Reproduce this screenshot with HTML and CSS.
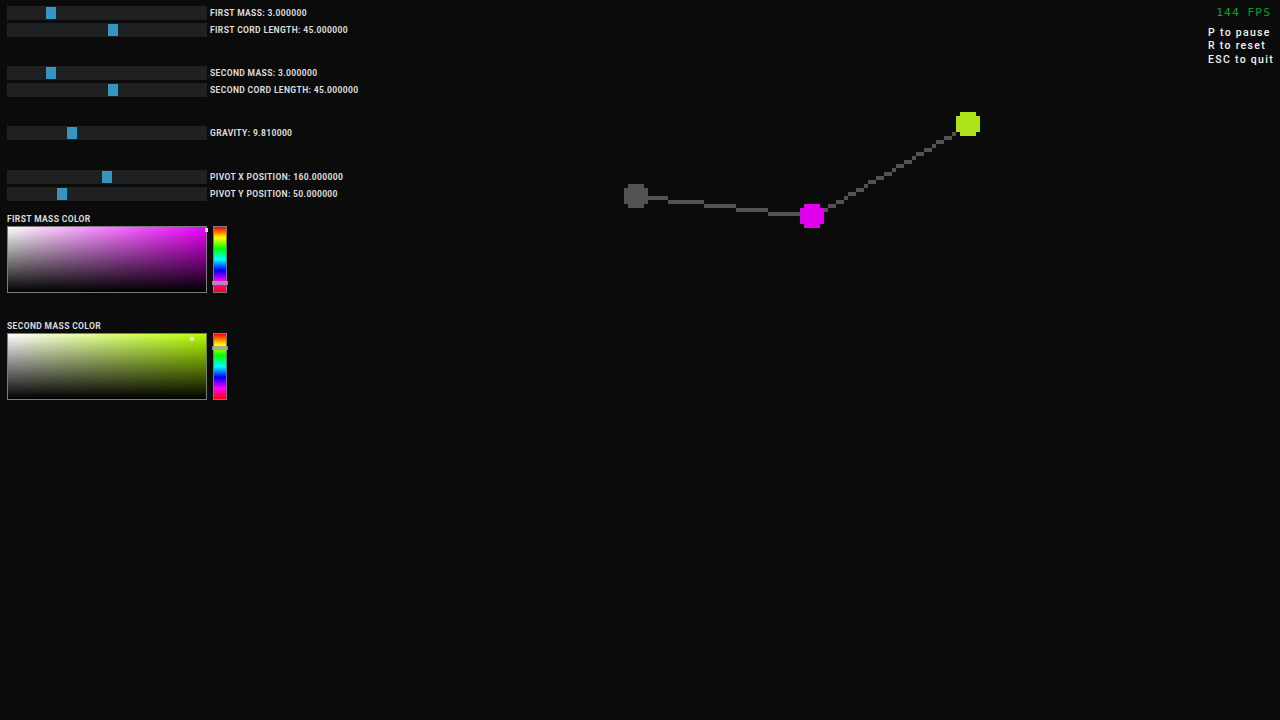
FILE: index.html
```html
<!DOCTYPE html>
<html lang="en">
<head>
<meta charset="utf-8">
<title>Double Pendulum</title>
<link rel="stylesheet" href="styles.css">
</head>
<body>
<svg class="sim" viewBox="0 0 320 180" width="1280" height="720" aria-hidden="true">
  <g class="rope">
    <rect x="157" y="46" width="4" height="1"/>
    <rect x="156" y="47" width="6" height="4"/>
    <rect x="157" y="51" width="4" height="1"/>
    <rect x="162" y="49" width="5" height="1"/>
    <rect x="167" y="50" width="9" height="1"/>
    <rect x="176" y="51" width="8" height="1"/>
    <rect x="184" y="52" width="8" height="1"/>
    <rect x="192" y="53" width="8" height="1"/>
    <rect x="206" y="52" width="1" height="1"/>
    <rect x="207" y="51" width="2" height="1"/>
    <rect x="209" y="50" width="2" height="1"/>
    <rect x="211" y="49" width="1" height="1"/>
    <rect x="212" y="48" width="2" height="1"/>
    <rect x="214" y="47" width="2" height="1"/>
    <rect x="216" y="46" width="1" height="1"/>
    <rect x="217" y="45" width="2" height="1"/>
    <rect x="219" y="44" width="2" height="1"/>
    <rect x="221" y="43" width="2" height="1"/>
    <rect x="223" y="42" width="1" height="1"/>
    <rect x="224" y="41" width="2" height="1"/>
    <rect x="226" y="40" width="2" height="1"/>
    <rect x="228" y="39" width="1" height="1"/>
    <rect x="229" y="38" width="2" height="1"/>
    <rect x="231" y="37" width="2" height="1"/>
    <rect x="233" y="36" width="1" height="1"/>
    <rect x="234" y="35" width="2" height="1"/>
    <rect x="236" y="34" width="2" height="1"/>
    <rect x="238" y="33" width="1" height="1"/>
  </g>
  <g class="mass-one">
    <rect x="201" y="51" width="4" height="1"/>
    <rect x="200" y="52" width="6" height="4"/>
    <rect x="201" y="56" width="4" height="1"/>
  </g>
  <g class="mass-two">
    <rect x="240" y="28" width="4" height="1"/>
    <rect x="239" y="29" width="6" height="4"/>
    <rect x="240" y="33" width="4" height="1"/>
  </g>
</svg>

<div class="screen">
  <div class="panel">
    <div class="group">
      <div class="row"><div class="track"><div class="thumb" style="margin-left:39px"></div></div><span class="label">FIRST MASS: 3.000000</span></div>
      <div class="row"><div class="track"><div class="thumb" style="margin-left:101px"></div></div><span class="label">FIRST CORD LENGTH: 45.000000</span></div>
    </div>
    <div class="group">
      <div class="row"><div class="track"><div class="thumb" style="margin-left:39px"></div></div><span class="label">SECOND MASS: 3.000000</span></div>
      <div class="row"><div class="track"><div class="thumb" style="margin-left:101px"></div></div><span class="label">SECOND CORD LENGTH: 45.000000</span></div>
    </div>
    <div class="group">
      <div class="row"><div class="track"><div class="thumb" style="margin-left:60px"></div></div><span class="label">GRAVITY: 9.810000</span></div>
    </div>
    <div class="group group-pivot">
      <div class="row"><div class="track"><div class="thumb" style="margin-left:95px"></div></div><span class="label">PIVOT X POSITION: 160.000000</span></div>
      <div class="row"><div class="track"><div class="thumb" style="margin-left:50px"></div></div><span class="label">PIVOT Y POSITION: 50.000000</span></div>
    </div>

    <div class="picker">
      <div class="label">FIRST MASS COLOR</div>
      <div class="picker-body">
        <div class="sv sv-one"><span class="sv-dot sv-dot-one"></span></div>
        <div class="hue"><span class="hue-sel" style="top:54px"></span></div>
      </div>
    </div>
    <div class="picker">
      <div class="label">SECOND MASS COLOR</div>
      <div class="picker-body">
        <div class="sv sv-two"><span class="sv-dot sv-dot-two"></span></div>
        <div class="hue"><span class="hue-sel" style="top:12px"></span></div>
      </div>
    </div>
  </div>

  <div class="hud">
    <div class="fps">144 FPS</div>
    <div class="help">P to pause<br>R to reset<br>ESC to quit</div>
  </div>
</div>
</body>
</html>
```

FILE: styles.css
```css
html, body {
  margin: 0;
  padding: 0;
}

body {
  width: 1280px;
  height: 720px;
  overflow: hidden;
  position: relative;
  background: #0b0b0b;
  font-family: Roboto, "Noto Sans", "Liberation Sans", sans-serif;
}

.sim {
  position: absolute;
  left: 0;
  top: 0;
  width: 1280px;
  height: 720px;
  shape-rendering: crispEdges;
}

.rope { fill: #535353; }
.mass-one { fill: #e000ec; }
.mass-two { fill: #abe218; }

.screen {
  position: relative;
  display: flex;
  justify-content: space-between;
  align-items: flex-start;
  height: 720px;
}

.panel {
  display: flex;
  flex-direction: column;
  padding: 6px 0 0 7px;
}

.group {
  display: flex;
  flex-direction: column;
  gap: 3px;
}

.group + .group {
  margin-top: 29px;
}

.group.group-pivot {
  margin-top: 30px;
}

.row {
  display: flex;
  align-items: center;
  gap: 3px;
  height: 14px;
}

.track {
  width: 200px;
  height: 14px;
  background: #1e2022;
  display: flex;
  align-items: center;
  flex: none;
}

.thumb {
  width: 10px;
  height: 12px;
  background: #3597c1;
}

.label {
  font-size: 8.5px;
  line-height: 10px;
  font-weight: 700;
  letter-spacing: 0.36px;
  color: #dcdcdc;
  white-space: nowrap;
}

.picker {
  display: flex;
  flex-direction: column;
  gap: 2px;
  margin-top: 13px;
}

.picker + .picker {
  margin-top: 28px;
}

.picker-body {
  display: flex;
  gap: 6px;
}

.sv {
  position: relative;
  width: 200px;
  height: 67px;
  box-sizing: border-box;
  border: 1px solid #7c7c7c;
}

.sv-one {
  background:
    linear-gradient(to bottom, rgba(0, 0, 0, 0), #000),
    linear-gradient(to right, #fff, rgb(238, 0, 255));
}

.sv-two {
  background:
    linear-gradient(to bottom, rgba(0, 0, 0, 0), #000),
    linear-gradient(to right, #fff, rgb(183, 255, 0));
}

.sv-dot {
  position: absolute;
  background: #e6e6e6;
}

.sv-dot-one {
  left: 197px;
  top: 1px;
  width: 3px;
  height: 4px;
}

.sv-dot-two {
  left: 182px;
  top: 3px;
  width: 4px;
  height: 4px;
  border-radius: 1px;
}

.hue {
  position: relative;
  width: 14px;
  height: 67px;
  box-sizing: border-box;
  border: 1px solid #7c7c7c;
  background: linear-gradient(to bottom, #f00, #ff0, #0f0, #0ff, #00f, #f0f, #f00);
}

.hue-sel {
  position: absolute;
  left: -2px;
  width: 16px;
  height: 4px;
  background: rgba(165, 165, 165, 0.85);
}

.hud {
  display: flex;
  flex-direction: column;
  align-items: flex-start;
  padding: 7px 6px 0 0;
}

.fps {
  align-self: flex-end;
  margin-right: 3px;
  font-family: "DejaVu Sans Mono", "Liberation Mono", monospace;
  font-size: 11px;
  line-height: 11px;
  letter-spacing: 1.2px;
  color: #05a036;
}

.help {
  margin-top: 8px;
  font-size: 10.5px;
  line-height: 13.3px;
  font-weight: 500;
  letter-spacing: 1.3px;
  color: #f2f2f2;
  white-space: nowrap;
}
```
